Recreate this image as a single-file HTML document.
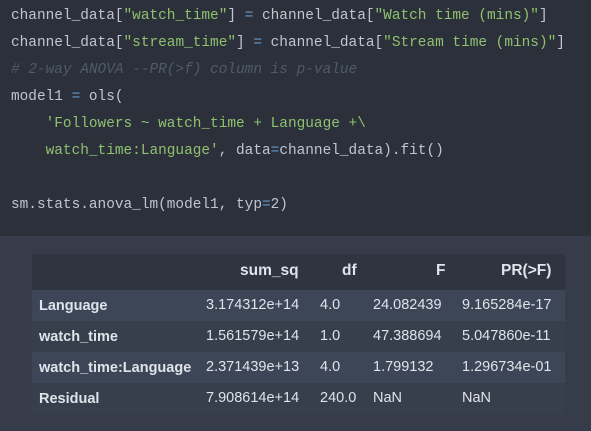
<!DOCTYPE html>
<html><head><style>
body{margin:0;width:591px;height:431px;background:#363c49;overflow:hidden;position:relative;font-family:"Liberation Sans",Arial,sans-serif}
.code{position:absolute;left:0;top:0;width:591px;height:236px;background:#2b303b}
.l{position:absolute;left:11px;font-family:"Liberation Mono",monospace;font-size:14.43px;color:#c0c5ce;white-space:pre}
.s{color:#8fc16f}.o{color:#6699cc}.c{color:#4f5b66;font-style:italic}
.tb{position:absolute;left:32px;top:254px;width:533px;height:159px}
.r{position:absolute;left:0;width:533px;height:31px}
.t{position:absolute;font-size:14.5px;color:#dfe3ea;white-space:nowrap}
.h{font-weight:bold;font-size:15.5px}
.b{font-weight:bold}
</style></head><body>
<div class="code">
<div class="l" style="top:8px">channel_data[<span class="s">"watch_time"</span>] <span class="o">=</span> channel_data[<span class="s">"Watch time (mins)"</span>]</div>
<div class="l" style="top:35px">channel_data[<span class="s">"stream_time"</span>] <span class="o">=</span> channel_data[<span class="s">"Stream time (mins)"</span>]</div>
<div class="l c" style="top:62px;color:#4f5b66"># 2-way ANOVA --PR(&gt;f) column is p-value</div>
<div class="l" style="top:89px">model1 <span class="o">=</span> ols(</div>
<div class="l" style="top:116px">    <span class="s">'Followers ~ watch_time + Language +\</span></div>
<div class="l" style="top:143px"><span class="s">    watch_time:Language'</span>, data<span class="o">=</span>channel_data).fit()</div>
<div class="l" style="top:197px">sm.stats.anova_lm(model1, typ<span class="o">=</span>2)</div>
</div>
<div class="tb">
<div class="r" style="top:0;height:36px;background:#2f3441"></div>
<div class="r" style="top:36px;background:#3d4657"></div>
<div class="r" style="top:67px;background:#373e4c"></div>
<div class="r" style="top:98px;background:#3d4657"></div>
<div class="r" style="top:129px;background:#373e4c;height:30px"></div>
</div>
<div class="t h" style="left:240px;top:262px">sum_sq</div>
<div class="t h" style="left:342px;top:262px">df</div>
<div class="t h" style="left:436px;top:262px">F</div>
<div class="t h" style="left:501px;top:262px">PR(&gt;F)</div>

<div class="t b" style="left:39px;top:298px">Language</div>
<div class="t" style="left:206px;top:297px">3.174312e+14</div>
<div class="t" style="left:320px;top:297px">4.0</div>
<div class="t" style="left:373px;top:297px">24.082439</div>
<div class="t" style="left:462px;top:297px">9.165284e-17</div>

<div class="t b" style="left:39px;top:329px">watch_time</div>
<div class="t" style="left:206px;top:328px">1.561579e+14</div>
<div class="t" style="left:320px;top:328px">1.0</div>
<div class="t" style="left:373px;top:328px">47.388694</div>
<div class="t" style="left:462px;top:328px">5.047860e-11</div>

<div class="t b" style="left:39px;top:360px">watch_time:Language</div>
<div class="t" style="left:206px;top:359px">2.371439e+13</div>
<div class="t" style="left:320px;top:359px">4.0</div>
<div class="t" style="left:373px;top:359px">1.799132</div>
<div class="t" style="left:462px;top:359px">1.296734e-01</div>

<div class="t b" style="left:39px;top:391px">Residual</div>
<div class="t" style="left:206px;top:390px">7.908614e+14</div>
<div class="t" style="left:320px;top:390px">240.0</div>
<div class="t" style="left:373px;top:390px">NaN</div>
<div class="t" style="left:462px;top:390px">NaN</div>
</body></html>
